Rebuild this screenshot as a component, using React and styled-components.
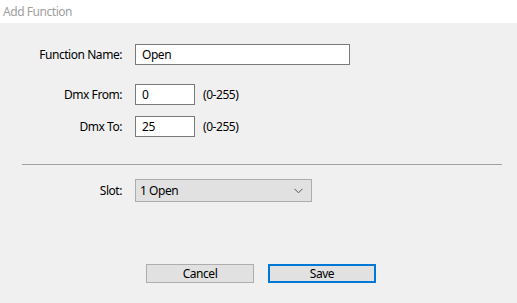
import React from "react";
import styled, { createGlobalStyle } from "styled-components";

const Global = createGlobalStyle`
  html, body { margin: 0; padding: 0; background: #f0f0f0; }
  body { font-family: "Noto Sans", "Open Sans", "Liberation Sans", sans-serif; font-size: 12px; letter-spacing: -0.45px; color: #000; }
  #root { width: 517px; height: 303px; overflow: hidden; }
`;

const Window = styled.div`
  width: 517px;
  height: 303px;
  display: flex;
  flex-direction: column;
  background: #f0f0f0;
`;

const TitleBar = styled.div`
  height: 23px;
  background: #fff;
  color: #a0a0a0;
  font-size: 12px;
  display: flex;
  align-items: center;
  padding-left: 3px;
`;

const Body = styled.div`
  display: flex;
  flex-direction: column;
  padding-top: 21px;
`;

const Row = styled.div`
  display: flex;
  align-items: center;
  height: ${p => p.$h || 21}px;
  margin-top: ${p => p.$top || 0}px;
`;

const Label = styled.label`
  width: 122px;
  text-align: right;
  margin-right: 13px;
  white-space: nowrap;
`;

const TextBox = styled.div`
  box-sizing: border-box;
  width: ${p => p.$w}px;
  height: 21px;
  background: #fff;
  border: 1px solid #7a7a7a;
  padding: 0 6px;
  display: flex;
  align-items: center;
  line-height: 1;
`;

const Hint = styled.span`
  margin-left: 8px;
`;

const Separator = styled.div`
  margin: 27px 15px 0 22px;
  height: 1px;
  background: #a0a0a0;
`;

const Select = styled.div`
  box-sizing: border-box;
  width: 177px;
  height: 23px;
  background: #e1e1e1;
  border: 1px solid #adadad;
  display: flex;
  align-items: center;
  justify-content: space-between;
  padding: 0 8px 0 4px;
`;

const Buttons = styled.div`
  display: flex;
  gap: 14px;
  padding-left: 146px;
  margin-top: 62px;
`;

const Button = styled.div`
  box-sizing: border-box;
  width: 108px;
  height: 19px;
  background: #e1e1e1;
  border: ${p => (p.$primary ? "2px solid #0078d7" : "1px solid #adadad")};
  display: flex;
  align-items: center;
  justify-content: center;
`;

export default function App() {
  return (
    <Window>
      <Global />
      <TitleBar>Add Function</TitleBar>
      <Body>
        <Row>
          <Label>Function Name:</Label>
          <TextBox $w={215}>Open</TextBox>
        </Row>
        <Row $top={19}>
          <Label>Dmx From:</Label>
          <TextBox $w={60}>0</TextBox>
          <Hint>(0-255)</Hint>
        </Row>
        <Row $top={11}>
          <Label>Dmx To:</Label>
          <TextBox $w={60}>25</TextBox>
          <Hint>(0-255)</Hint>
        </Row>
        <Separator />
        <Row $top={14} $h={23}>
          <Label>Slot:</Label>
          <Select>
            <span>1 Open</span>
            <svg width="9" height="6" viewBox="0 0 9 6">
              <path d="M0.5 0.8 L4.5 4.8 L8.5 0.8" fill="none" stroke="#555" strokeWidth="1" />
            </svg>
          </Select>
        </Row>
        <Buttons>
          <Button>Cancel</Button>
          <Button $primary>Save</Button>
        </Buttons>
      </Body>
    </Window>
  );
}
